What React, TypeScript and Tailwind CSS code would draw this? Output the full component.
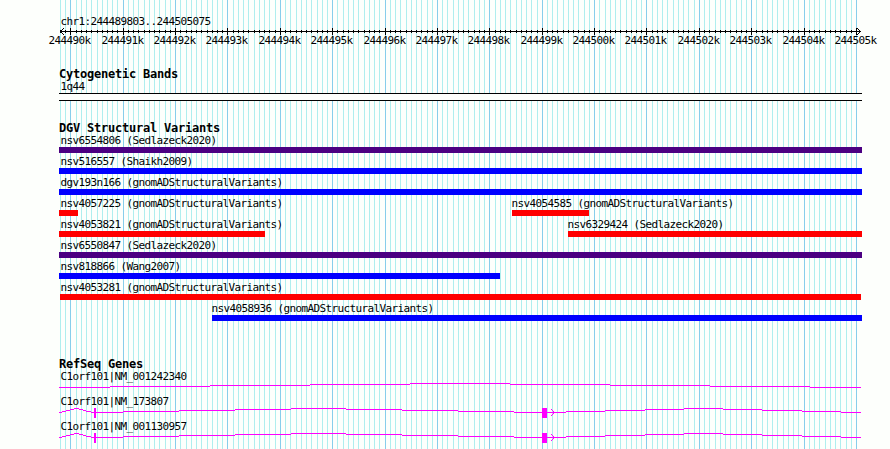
import { FC } from "react";

const REGION_START = 244489803;
const REGION_END = 244505075;
const PLOT_LEFT = 60;
const PLOT_WIDTH = 800;

const toX = (pos: number) =>
  Math.round(PLOT_LEFT + ((pos - REGION_START) * PLOT_WIDTH) / (REGION_END - REGION_START + 1));

const ticks: { pos: number; x: number; major: boolean }[] = [];
for (let pos = Math.ceil(REGION_START / 100) * 100 - 100; pos <= REGION_END; pos += 100) {
  if (toX(pos) >= PLOT_LEFT) {
    ticks.push({ pos, x: toX(pos), major: pos % 1000 === 0 });
  }
}

interface Feature {
  name: string;
  start: number;
  end: number;
  color: string;
  shift?: string;
}

const INDIGO = "bg-[#4b0082]";
const BLUE = "bg-[#0000ff]";
const RED = "bg-[#ff0000]";

const variantRows: Feature[][] = [
  [{ name: "nsv6554806 (Sedlazeck2020)", start: 59, end: 862, color: INDIGO, shift: "ml-[1.5px]" }],
  [{ name: "nsv516557 (Shaikh2009)", start: 59, end: 862, color: BLUE, shift: "ml-[1.5px]" }],
  [{ name: "dgv193n166 (gnomADStructuralVariants)", start: 59, end: 862, color: BLUE, shift: "ml-[1.5px]" }],
  [
    { name: "nsv4057225 (gnomADStructuralVariants)", start: 59, end: 78, color: RED, shift: "ml-[1.5px]" },
    { name: "nsv4054585 (gnomADStructuralVariants)", start: 512, end: 589, color: RED, shift: "-ml-[0.5px]" },
  ],
  [
    { name: "nsv4053821 (gnomADStructuralVariants)", start: 59, end: 265, color: RED, shift: "ml-[1.5px]" },
    { name: "nsv6329424 (Sedlazeck2020)", start: 568, end: 862, color: RED, shift: "-ml-[0.5px]" },
  ],
  [{ name: "nsv6550847 (Sedlazeck2020)", start: 59, end: 862, color: INDIGO, shift: "ml-[1.5px]" }],
  [{ name: "nsv818866 (Wang2007)", start: 59, end: 500, color: BLUE, shift: "ml-[1.5px]" }],
  [{ name: "nsv4053281 (gnomADStructuralVariants)", start: 60, end: 861, color: RED, shift: "ml-[0.5px]" }],
  [{ name: "nsv4058936 (gnomADStructuralVariants)", start: 212, end: 862, color: BLUE, shift: "-ml-[0.5px]" }],
];

// [x, y] pairs, each step runs until the x of the next one
const longIntron = [
  [59, 4], [110, 3], [210, 2], [310, 1], [410, 0], [510, 1], [610, 2], [710, 3], [810, 4], [861, 4],
];
const splicedIntrons = [
  [59, 4], [62, 3], [66, 2], [70, 1], [74, 0], [79, 1], [83, 2], [86, 3], [91, 4],
  [123, 3], [179, 2], [235, 1], [291, 0], [346, 1], [402, 2], [458, 3], [514, 4],
  [566, 3], [605, 2], [645, 1], [684, 0], [723, 1], [762, 2], [802, 3], [841, 4], [861, 4],
];

const genes = [
  { name: "C1orf101|NM_001242340", steps: longIntron, exons: false },
  { name: "C1orf101|NM_173807", steps: splicedIntrons, exons: true },
  { name: "C1orf101|NM_001130957", steps: splicedIntrons, exons: true },
];

const stepPath = (steps: number[][]) =>
  steps
    .slice(0, -1)
    .map(([x, y], i) => `M${x} ${y + 0.5}H${steps[i + 1][0]}`)
    .join("");

const Gridlines: FC = () => (
  <svg className="absolute inset-0" width="890" height="449" shapeRendering="crispEdges">
    {ticks.map((t) => (
      <rect key={t.pos} x={t.x} y="0" width="1" height="449" fill={t.major ? "#87ceeb" : "#afeeee"} />
    ))}
  </svg>
);

const Ruler: FC = () => (
  <svg className="block" width="890" height="20">
    <g shapeRendering="crispEdges">
      <rect x="60" y="3" width="801" height="1" />
      {ticks.map((t) => (
        <rect key={t.pos} x={t.x} y={t.major ? 0 : 2} width="1" height={t.major ? 7 : 3} />
      ))}
      {[1, 2, 3].map((d) => (
        <g key={d}>
          <rect x={60 + d} y={3 - d} width="1" height="1" />
          <rect x={60 + d} y={3 + d} width="1" height="1" />
          <rect x={860 - d} y={3 - d} width="1" height="1" />
          <rect x={860 - d} y={3 + d} width="1" height="1" />
        </g>
      ))}
    </g>
    {ticks
      .filter((t) => t.major)
      .map((t) => (
        <text key={t.pos} x={t.x - 21.5} y="16">
          {t.pos / 1000}k
        </text>
      ))}
  </svg>
);

const TrackTitle: FC<{ title: string }> = ({ title }) => (
  <h2 className="h-3 pl-[59px] text-[12px] leading-[12px] font-bold tracking-[-0.224px]">{title}</h2>
);

const VariantRow: FC<{ features: Feature[] }> = ({ features }) => (
  <div className="flex h-[21px]">
    {features.map((f, i) => (
      <div
        key={f.name}
        className="shrink-0"
        style={{ width: f.end - f.start, marginLeft: f.start - (i ? features[i - 1].end : 0) }}
      >
        <div className={f.shift}>{f.name}</div>
        <div className={`h-1.5 ${f.color}`} />
      </div>
    ))}
  </div>
);

const App: FC = () => {
  return (
    <div className="relative w-[890px] h-[449px] overflow-hidden bg-[#fdfffc] text-black font-['DejaVu_Sans_Mono',monospace] text-[11px] leading-[13px] tracking-[-0.622px] whitespace-nowrap">
      <Gridlines />
      <div className="relative pt-[15px]">
        <div className="pl-[60.5px]">chr1:244489803..244505075</div>
        <Ruler />

        <section className="mt-5">
          <TrackTitle title="Cytogenetic Bands" />
          <div className="pl-[60.5px]">1q44</div>
          <div className="ml-[59px] w-[803px] h-2 border-y border-black bg-[#fdfffc]" />
        </section>

        <section className="mt-[21px]">
          <TrackTitle title="DGV Structural Variants" />
          {variantRows.map((features, index) => (
            <VariantRow key={index} features={features} />
          ))}
        </section>

        <section className="mt-[35px]">
          <TrackTitle title="RefSeq Genes" />
          {genes.map((gene) => (
            <div key={gene.name}>
              <div className="pl-[60.5px]">{gene.name}</div>
              <svg className="block" width="890" height="12" shapeRendering="crispEdges">
                <path d={stepPath(gene.steps)} stroke="#ff00ff" fill="none" />
                {gene.exons && (
                  <g fill="#ff00ff">
                    <rect x="94" y="0" width="2" height="10" />
                    <rect x="542" y="0" width="5" height="10" />
                    <path d="M551 1h1v1h-1zM552 2h1v1h-1zM553 3h1v3h-1zM552 6h1v1h-1zM551 7h1v1h-1z" />
                  </g>
                )}
              </svg>
            </div>
          ))}
        </section>
      </div>
    </div>
  );
};

export default App;
